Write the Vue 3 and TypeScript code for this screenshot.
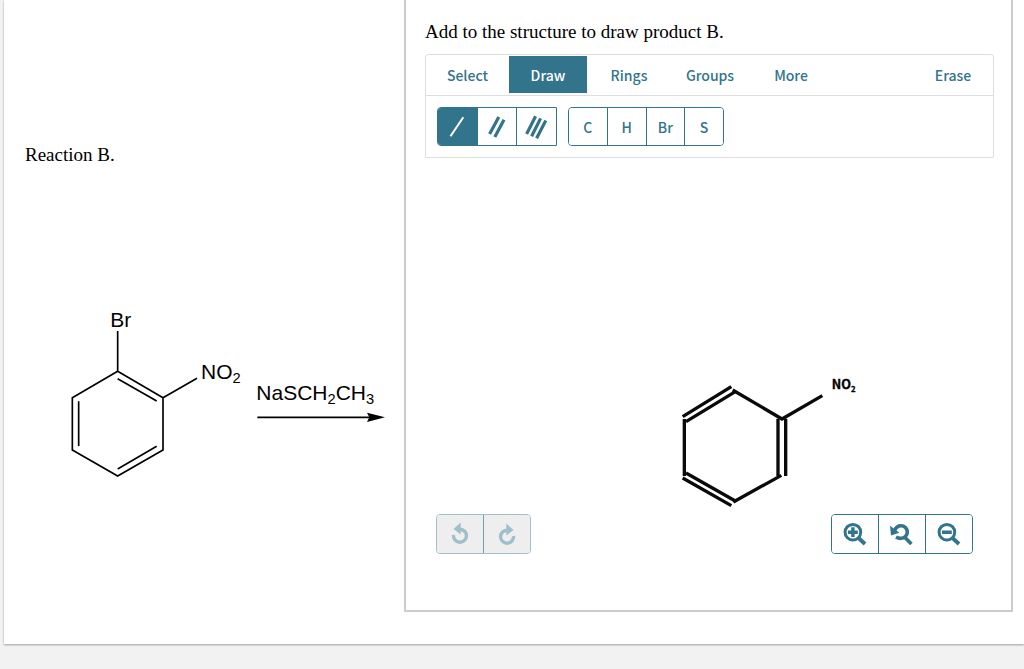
<script setup lang="ts">
import { ref } from 'vue'

type BondId = 'single' | 'double' | 'triple'

interface Bond {
  id: BondId
  label: string
  weight: number
  path: string
}

const tabs: string[] = ['Select', 'Draw', 'Rings', 'Groups', 'More']
const activeTab = ref('Draw')

const bonds: Bond[] = [
  { id: 'single', label: 'Single bond', weight: 2, path: 'M5.5 21.2 18.3 2.2' },
  { id: 'double', label: 'Double bond', weight: 3.2, path: 'M4.6 19 13.8 2M9.8 22 19 4.7' },
  { id: 'triple', label: 'Triple bond', weight: 3.2, path: 'M1.6 19 10.6 1.2M6.6 21.3 15.6 3.4M11.6 23.3 20.8 5.6' },
]
const activeBond = ref<BondId>('single')

const atoms: string[] = ['C', 'H', 'Br', 'S']
</script>

<template>
  <main class="sheet">
    <section class="reaction">
      <p class="reaction-title">Reaction B.</p>
      <svg class="scheme" viewBox="0 0 1050 570" role="img" aria-label="2-bromonitrobenzene with NaSCH2CH3">
        <g fill="none" stroke="#000" stroke-width="5">
          <path d="M203 214 339 293V450L203 528 67 450V293ZM203 214V93M339 293 441 235" />
          <path d="M203 236 320 303M320 439 203 507M86 438V304" />
          <path d="M622 352H965" />
        </g>
        <path d="M1005 352 951 338 958 352 951 366Z" />
        <g font-size="63">
          <text x="181" y="80">Br</text>
          <text x="453" y="237">NO<tspan font-size="44" dy="12">2</tspan></text>
          <text x="619" y="299">NaSCH<tspan font-size="44" dy="12">2</tspan><tspan dy="-12">CH</tspan><tspan font-size="44" dy="12">3</tspan></text>
        </g>
      </svg>
    </section>

    <section class="editor">
      <h1 class="prompt">Add to the structure to draw product B.</h1>
      <div class="toolbar">
        <nav class="tabs">
          <button
            v-for="tab in tabs"
            :key="tab"
            type="button"
            class="tab"
            :class="{ active: tab === activeTab }"
            @click="activeTab = tab"
          >{{ tab }}</button>
          <button type="button" class="tab erase">Erase</button>
        </nav>
        <div class="tools">
          <div class="group bonds">
            <button
              v-for="bond in bonds"
              :key="bond.id"
              type="button"
              :aria-label="bond.label"
              :class="{ active: bond.id === activeBond }"
              @click="activeBond = bond.id"
            >
              <svg class="icon" viewBox="0 0 24 24">
                <path :d="bond.path" :stroke-width="bond.weight" stroke="currentColor" fill="none" />
              </svg>
            </button>
          </div>
          <div class="group atoms">
            <button v-for="atom in atoms" :key="atom" type="button">{{ atom }}</button>
          </div>
        </div>
      </div>

      <div class="canvas">
        <svg class="molecule" viewBox="0 0 600 432" role="img" aria-label="Nitrobenzene">
          <g fill="none" stroke="#0a0a0a" stroke-width="10">
            <path d="M38 140 184 50M48 155 196 65" />
            <path d="M188 60 336 147 457 77" />
            <path d="M324 146V318M347 146V318" />
            <path d="M334 316 190 396" />
            <path d="M38 324 184 407M48 309 196 393" />
            <path d="M43 147V318" />
          </g>
          <text x="485" y="58" font-size="38" font-weight="700" stroke="#000">NO<tspan font-size="23" dy="8">2</tspan></text>
        </svg>
      </div>

      <div class="controls">
        <div class="group history">
          <button type="button" disabled aria-label="Undo">
            <svg class="icon" viewBox="0 0 24 24">
              <path d="M5.5 13A6.5 6.5 0 1 0 12 7.2" fill="none" stroke="currentColor" stroke-width="3.4" />
              <path d="M5.5 7 12.700 0.500V12.500Z" fill="currentColor" />
            </svg>
          </button>
          <button type="button" disabled aria-label="Redo">
            <svg class="icon" viewBox="0 0 24 24">
              <path d="M18.500 14A6.5 6.5 0 1 1 12 8.200" fill="none" stroke="currentColor" stroke-width="3.4" />
              <path d="M18.500 8 11.300 1.500V13.500Z" fill="currentColor" />
            </svg>
          </button>
        </div>
        <div class="group zoom">
          <button type="button" aria-label="Zoom in">
            <svg class="icon" viewBox="0 0 24 24" fill="none" stroke="currentColor" stroke-width="3">
              <circle cx="9.9" cy="10.2" r="7.8" />
              <path d="M15 15.5 22 22" stroke-width="3.8" />
              <path d="M5 10.2H14.8M9.9 5.300V15.100" stroke-width="3.400" />
            </svg>
          </button>
          <button type="button" aria-label="Reset zoom">
            <svg class="icon" viewBox="0 0 24 24" fill="none" stroke="currentColor" stroke-width="3.6">
              <path d="M4.6 8.4C6 5 8.4 3.7 11 3.7A6.3 6.3 0 0 1 11 16.3Q8.5 16.5 6 15.2" />
              <path d="M15 15.5 21.4 22" />
              <path d="M0 3.8 1 13.4 9.4 10.8Z" fill="currentColor" stroke="none" />
            </svg>
          </button>
          <button type="button" aria-label="Zoom out">
            <svg class="icon" viewBox="0 0 24 24" fill="none" stroke="currentColor" stroke-width="3">
              <circle cx="9.9" cy="10.2" r="7.8" />
              <path d="M15 15.5 22 22" stroke-width="3.8" />
              <path d="M5 10.2H14.8" stroke-width="3.400" />
            </svg>
          </button>
        </div>
      </div>
    </section>
  </main>
</template>

<style>
body {
  margin: 0;
  background: #f2f2f2;
}
</style>

<style scoped>
.sheet {
  display: flex;
  margin: 0 0 24px 4px;
  padding: 0 11px 32px 0;
  background: #fff;
  box-shadow: 0 1px 2px rgba(0, 0, 0, 0.35);
  font-family: "Liberation Serif", "Times New Roman", serif;
  color: #000;
}

.reaction {
  flex: 0 0 400px;
}

.reaction-title {
  margin: 143px 0 0 21px;
  font-size: 19px;
  line-height: 24px;
}

.scheme {
  display: block;
  width: 350px;
  height: 190px;
  margin: 133px 0 0 46px;
  font-family: "Liberation Sans", Arial, sans-serif;
}

.editor {
  flex: 1;
  min-width: 0;
  padding: 0 17px 56px 19px;
  border: 2px solid #ccc;
  border-top: 0;
}

.prompt {
  margin: 20px 0 10px;
  font-size: 19px;
  font-weight: 400;
  line-height: 24px;
}

.toolbar {
  border: 1px solid #dedede;
  border-radius: 3px 3px 0 0;
}

button {
  margin: 0;
  padding: 0;
  border: 0;
  background: #fff;
  color: #31748b;
  font-family: "Noto Sans CJK SC", "Open Sans", sans-serif;
  font-size: 14px;
  font-weight: 500;
  line-height: 20px;
}

button.active {
  background: #31748b;
  color: #fff;
}

.tabs {
  display: flex;
  align-items: flex-end;
  box-sizing: border-box;
  height: 41px;
  padding-bottom: 2px;
  border-bottom: 1px solid #dedede;
}

.tab {
  width: 84px;
  height: 37px;
}

.tab:nth-child(even) {
  width: 78px;
}

.tab:first-child {
  width: 83px;
}

.tab.erase {
  margin-left: auto;
  width: 80px;
}

.tools {
  display: flex;
  gap: 11px;
  padding: 11px;
}

.group {
  display: flex;
  box-sizing: border-box;
  height: 40px;
  border: 1px solid #31748b;
  border-radius: 4px;
  overflow: hidden;
}

.group button {
  display: flex;
  flex: 1;
  align-items: center;
  justify-content: center;
}

.group button + button {
  border-left: 1px solid #31748b;
}

.icon {
  display: block;
  flex: none;
  width: 24px;
  height: 24px;
}

.bonds {
  width: 120px;
  height: 39px;
  border-radius: 4px 0 0 4px;
}

.atoms {
  width: 156px;
  height: 39px;
}

.canvas {
  padding: 212px 0 0 245px;
}

.molecule {
  display: block;
  width: 200px;
  height: 144px;
  font-family: "Noto Sans CJK SC", "Open Sans", sans-serif;
}

.controls {
  display: flex;
  justify-content: space-between;
  padding: 0 21px 0 11px;
}

.history {
  width: 95px;
  border-color: #9dc0ca;
}

.history button {
  background: #eee;
  color: #9dc0ca;
}

.history button + button {
  border-color: #6fa3b2;
}

.zoom {
  width: 142px;
}
</style>
